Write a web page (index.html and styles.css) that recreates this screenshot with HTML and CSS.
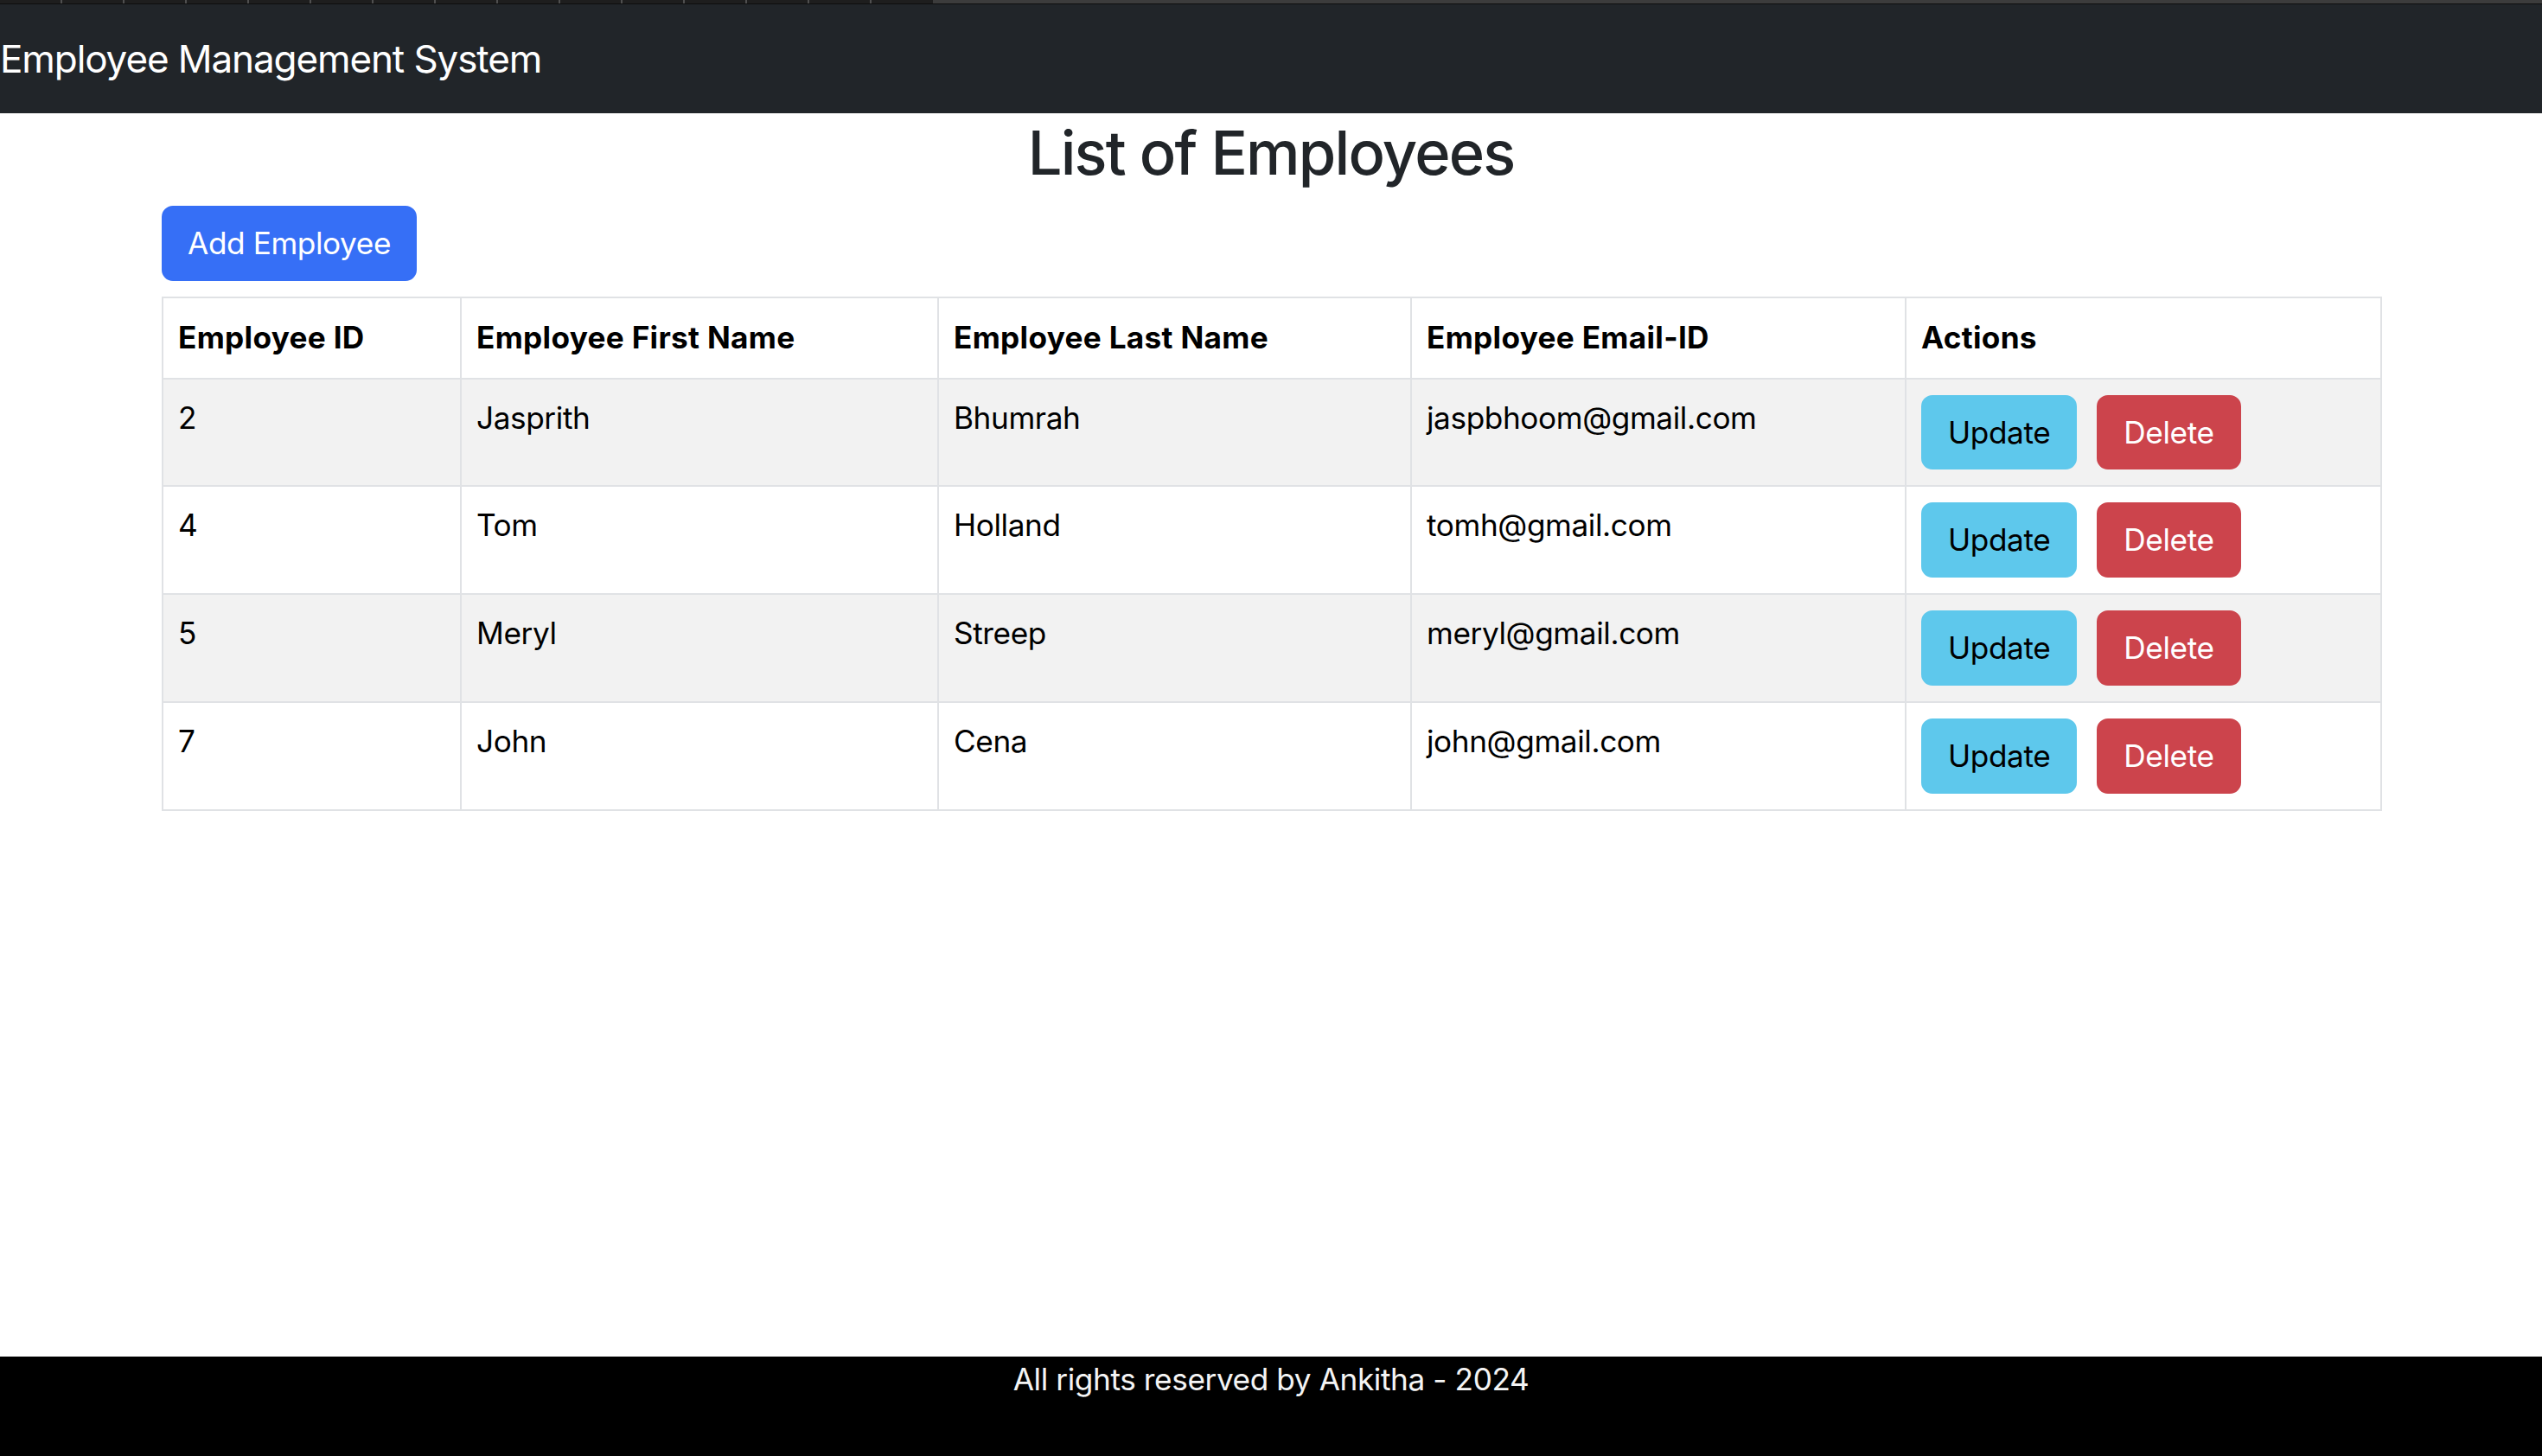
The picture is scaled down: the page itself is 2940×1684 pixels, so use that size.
FILE: index.html
```html
<!DOCTYPE html>
<html lang="en">
<head>
<meta charset="utf-8">
<title>Employee Management System</title>
<link rel="stylesheet" href="styles.css">
</head>
<body>
<div class="page">
  <div class="topstrip">
    <div class="ticks">
      <span></span><span></span><span></span><span></span><span></span><span></span><span></span><span></span><span></span><span></span><span></span><span></span><span></span><span></span>
    </div>
    <div class="strip-light"></div>
  </div>
  <header class="navbar">
    <span class="brand">Employee Management System</span>
  </header>
  <main class="main">
    <h2 class="title">List of Employees</h2>
    <div class="container">
      <div class="toolbar">
        <button class="btn btn-primary">Add Employee</button>
      </div>
      <table class="table">
        <colgroup>
          <col class="c1"><col class="c2"><col class="c3"><col class="c4"><col class="c5">
        </colgroup>
        <thead>
          <tr>
            <th>Employee ID</th>
            <th>Employee First Name</th>
            <th>Employee Last Name</th>
            <th>Employee Email-ID</th>
            <th>Actions</th>
          </tr>
        </thead>
        <tbody>
          <tr class="odd">
            <td>2</td><td>Jasprith</td><td>Bhumrah</td><td>jaspbhoom@gmail.com</td>
            <td><div class="actions"><button class="btn btn-info">Update</button><button class="btn btn-danger">Delete</button></div></td>
          </tr>
          <tr>
            <td>4</td><td>Tom</td><td>Holland</td><td>tomh@gmail.com</td>
            <td><div class="actions"><button class="btn btn-info">Update</button><button class="btn btn-danger">Delete</button></div></td>
          </tr>
          <tr class="odd">
            <td>5</td><td>Meryl</td><td>Streep</td><td>meryl@gmail.com</td>
            <td><div class="actions"><button class="btn btn-info">Update</button><button class="btn btn-danger">Delete</button></div></td>
          </tr>
          <tr>
            <td>7</td><td>John</td><td>Cena</td><td>john@gmail.com</td>
            <td><div class="actions"><button class="btn btn-info">Update</button><button class="btn btn-danger">Delete</button></div></td>
          </tr>
        </tbody>
      </table>
    </div>
  </main>
  <footer class="footer">
    <span class="footer-text">All rights reserved by Ankitha - 2024</span>
  </footer>
</div>
</body>
</html>
```

FILE: styles.css
```css
* { box-sizing: border-box; }
html, body {
  margin: 0;
  padding: 0;
  height: 100%;
}
body {
  font-family: Inter, "Noto Sans", "Liberation Sans", sans-serif;
  color: #212529;
  background: #fff;
}
.page {
  min-height: 100vh;
  display: flex;
  flex-direction: column;
}
.topstrip {
  height: 5px;
  display: flex;
  background: #1e1e1e;
  border-bottom: 1px solid #0e0e0e;
}
.ticks {
  width: 1079px;
  height: 4px;
  display: flex;
  padding-left: 70px;
  gap: 70px;
}
.ticks span {
  width: 2px;
  height: 4px;
  background: #4f4f4f;
  flex: none;
}
.strip-light {
  flex: 1;
  height: 4px;
  background: #3c3c3c;
}
.navbar {
  height: 126px;
  background: #212529;
  display: flex;
  align-items: center;
}
.brand {
  color: #fff;
  font-size: 44px;
  line-height: 66px;
  letter-spacing: -1.1px;
}
.main {
  flex: 1;
  display: flex;
  flex-direction: column;
}
.title {
  margin: 0 0 19px;
  padding-top: 4px;
  text-align: center;
  font-size: 70.4px;
  font-weight: 500;
  line-height: 84px;
  letter-spacing: -1.8px;
  color: #212529;
}
.container {
  width: 2566px;
  margin: 0 auto;
}
.toolbar {
  margin-bottom: 18px;
}
.btn {
  font-family: inherit;
  font-size: 35.2px;
  line-height: 52.8px;
  padding: 15px 29px;
  border: 2px solid transparent;
  border-radius: 13px;
  cursor: pointer;
  letter-spacing: -0.4px;
}
.btn-primary {
  background: #366ff6;
  border-color: #366ff6;
  color: #fff;
  padding-left: 28px;
  padding-right: 28px;
}
.btn-info {
  background: #5ec8ec;
  border-color: #5ec8ec;
  color: #000;
}
.btn-danger {
  background: #cc444c;
  border-color: #cc444c;
  color: #fff;
}
.table {
  width: 100%;
  border-collapse: collapse;
  table-layout: fixed;
  font-size: 35.2px;
  line-height: 52.8px;
  color: #000;
  letter-spacing: -0.4px;
}
.c1 { width: 345px; }
.c2 { width: 552px; }
.c3 { width: 547px; }
.c4 { width: 572px; }
.c5 { width: 550px; }
.table th, .table td {
  border: 2px solid #e0e2e5;
  padding: 18px 17px;
  text-align: left;
  vertical-align: top;
}
.table th {
  font-weight: 700;
  letter-spacing: 0.3px;
  padding-top: 19px;
  padding-bottom: 20px;
}
.table tr.odd td {
  background: #f2f2f2;
}
.actions {
  display: flex;
  gap: 23px;
}
.footer {
  height: 115px;
  background: #000;
  text-align: center;
}
.footer-text {
  color: #f4f4f4;
  font-size: 35.2px;
  line-height: 52.8px;
  letter-spacing: -0.4px;
}
```
